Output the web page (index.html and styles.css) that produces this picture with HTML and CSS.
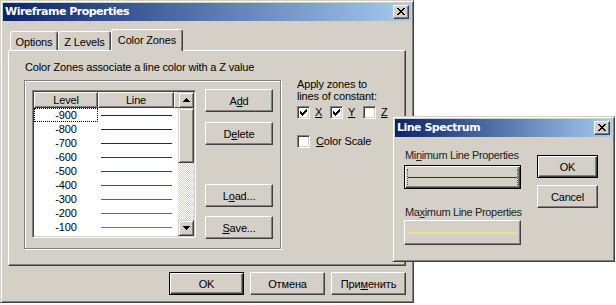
FILE: index.html
```html
<!DOCTYPE html>
<html>
<head>
<meta charset="utf-8">
<title>Wireframe Properties</title>
<link rel="stylesheet" href="styles.css">
</head>
<body>
<div class="desk">
  <div class="win main">
    <div class="titlebar">
      <span class="title">Wireframe Properties</span>
      <span class="xbtn"><svg width="8" height="7" viewBox="0 0 8 7" shape-rendering="crispEdges"><path d="M0 0h2v1h-2zM6 0h2v1h-2zM1 1h2v1h-2zM5 1h2v1h-2zM2 2h4v1h-4zM3 3h2v1h-2zM2 4h4v1h-4zM1 5h2v1h-2zM5 5h2v1h-2zM0 6h2v1h-2zM6 6h2v1h-2z" fill="#000"/></svg></span>
    </div>
    <div class="body">
      <div class="tabs">
        <div class="tab t1">Options</div>
        <div class="tab t2">Z Levels</div>
        <div class="tab sel">Color Zones</div>
      </div>
      <div class="panel">
        <div class="left">
          <div class="desc">Color Zones associate a line color with a Z value</div>
          <div class="group">
            <div class="grid">
              <div class="gmain">
                <div class="ghead"><div class="hc lv">Level</div><div class="hc ln">Line</div><div class="hc sp"></div></div>
                <div class="row"><div class="c lv focus">-900</div><div class="c ln"><i style="background:#1c1c78"></i></div></div>
                <div class="row"><div class="c lv">-800</div><div class="c ln"><i style="background:#1e1e7c"></i></div></div>
                <div class="row"><div class="c lv">-700</div><div class="c ln"><i style="background:#222280"></i></div></div>
                <div class="row"><div class="c lv">-600</div><div class="c ln"><i style="background:#2a2a84"></i></div></div>
                <div class="row"><div class="c lv">-500</div><div class="c ln"><i style="background:#3c3c88"></i></div></div>
                <div class="row"><div class="c lv">-400</div><div class="c ln"><i style="background:#4a4a8c"></i></div></div>
                <div class="row"><div class="c lv">-300</div><div class="c ln"><i style="background:#5e5e6e"></i></div></div>
                <div class="row"><div class="c lv">-200</div><div class="c ln"><i style="background:#686868"></i></div></div>
                <div class="row"><div class="c lv">-100</div><div class="c ln"><i style="background:#747474"></i></div></div>
              </div>
              <div class="sbar">
                <div class="bevel sb"><svg width="7" height="4" viewBox="0 0 7 4" shape-rendering="crispEdges"><path d="M3 0h1v1h-1zM2 1h3v1h-3zM1 2h5v1h-5zM0 3h7v1h-7z" fill="#000"/></svg></div>
                <div class="bevel thumb"></div>
                <div class="track"></div>
                <div class="bevel sb"><svg width="7" height="4" viewBox="0 0 7 4" shape-rendering="crispEdges"><path d="M0 0h7v1h-7zM1 1h5v1h-5zM2 2h3v1h-3zM3 3h1v1h-1z" fill="#000"/></svg></div>
              </div>
            </div>
            <div class="btncol">
              <div class="btn">A<u>d</u>d</div>
              <div class="btn b-del">D<u>e</u>lete</div>
              <div class="btn b-load">L<u>o</u>ad...</div>
              <div class="btn b-save"><u>S</u>ave...</div>
            </div>
          </div>
        </div>
        <div class="right">
          <div class="apply">Apply zones to<br>lines of constant:</div>
          <div class="checks">
            <div class="chk"><span class="box"><svg width="7" height="7" viewBox="0 0 7 7" shape-rendering="crispEdges"><path d="M0 2h1v3h-1zM1 3h1v3h-1zM2 4h1v3h-1zM3 3h1v3h-1zM4 2h1v3h-1zM5 1h1v3h-1zM6 0h1v3h-1z" fill="#000"/></svg></span><u>X</u></div>
            <div class="chk"><span class="box"><svg width="7" height="7" viewBox="0 0 7 7" shape-rendering="crispEdges"><path d="M0 2h1v3h-1zM1 3h1v3h-1zM2 4h1v3h-1zM3 3h1v3h-1zM4 2h1v3h-1zM5 1h1v3h-1zM6 0h1v3h-1z" fill="#000"/></svg></span><u>Y</u></div>
            <div class="chk"><span class="box"></span><u>Z</u></div>
          </div>
          <div class="chk scale"><span class="box"></span><span><u>C</u>olor Scale</span></div>
        </div>
      </div>
      <div class="actions">
        <div class="btn wide def">OK</div>
        <div class="btn wide">Отмена</div>
        <div class="btn wide">При<u>м</u>енить</div>
      </div>
    </div>
  </div>

  <div class="win spec">
    <div class="titlebar">
      <span class="title">Line Spectrum</span>
      <span class="xbtn"><svg width="8" height="7" viewBox="0 0 8 7" shape-rendering="crispEdges"><path d="M0 0h2v1h-2zM6 0h2v1h-2zM1 1h2v1h-2zM5 1h2v1h-2zM2 2h4v1h-4zM3 3h2v1h-2zM2 4h4v1h-4zM1 5h2v1h-2zM5 5h2v1h-2zM0 6h2v1h-2zM6 6h2v1h-2z" fill="#000"/></svg></span>
    </div>
    <div class="sbody">
      <div class="scol1">
        <div class="lbl">Mi<u>n</u>imum Line Properties</div>
        <div class="lbtn minb"><span class="focusline"></span><span class="minline"></span></div>
        <div class="lbl lbl2">Ma<u>x</u>imum Line Properties</div>
        <div class="btn lbtn maxb"><span class="maxline"></span></div>
      </div>
      <div class="scol2">
        <div class="btn sbtn def">OK</div>
        <div class="btn sbtn cancel">Cancel</div>
      </div>
    </div>
  </div>
</div>
</body>
</html>
```

FILE: styles.css
```css
* { box-sizing: border-box; margin: 0; padding: 0; }
html, body { width: 616px; height: 305px; overflow: hidden; background: #fff; }
body {
  font-family: "Liberation Sans", Arial, sans-serif;
  font-size: 11px;
  color: #000;
  letter-spacing: -0.15px;
}
.desk { position: relative; width: 616px; height: 305px; }

.win {
  background: #d4d0c8;
  border: 1px solid;
  border-color: #d4d0c8 #404040 #404040 #d4d0c8;
  box-shadow: inset 1px 1px #fff, inset -1px -1px #808080;
  padding: 2px;
  display: flex;
  flex-direction: column;
}
.main { width: 414px; height: 303px; }

.titlebar {
  height: 18px;
  flex: none;
  display: flex;
  align-items: center;
  justify-content: space-between;
  padding: 0 2px;
  background: linear-gradient(to right, #0a246a, #a6caf0);
}
.title {
  color: #fff;
  font-family: "DejaVu Sans", sans-serif;
  font-weight: bold;
  font-size: 11px;
  letter-spacing: -0.5px;
  line-height: 18px;
}
.xbtn {
  width: 16px;
  height: 14px;
  background: #d4d0c8;
  border: 1px solid;
  border-color: #fff #404040 #404040 #fff;
  box-shadow: inset -1px -1px #808080;
  padding: 2px 0 0 3px;
}
.xbtn svg { display: block; }

.body { flex: 1; display: flex; flex-direction: column; padding: 8px 5px 0; }

.tabs { display: flex; align-items: flex-end; height: 21px; padding-left: 2px; }
.tab {
  height: 19px;
  border: 1px solid;
  border-bottom: none;
  border-color: #fff #404040 #fff #fff;
  border-radius: 3px 3px 0 0;
  box-shadow: inset -1px 0 #808080;
  display: flex;
  align-items: center;
  justify-content: center;
  padding-top: 2px;
  background: #d4d0c8;
}
.t1 { width: 48px; }
.t2 { width: 53px; }
.sel {
  width: 72px;
  height: 22px;
  margin-bottom: -1px;
  position: relative;
  z-index: 1;
  padding-top: 0;
  padding-bottom: 1px;
}

.panel {
  height: 216px;
  border: 1px solid;
  border-color: #fff #404040 #404040 #fff;
  box-shadow: inset -1px -1px #808080;
  display: flex;
  gap: 16px;
  padding: 10px 0 0 15px;
}
.left { width: 257px; }
.desc { height: 13px; line-height: 13px; padding-left: 1px; white-space: nowrap; }
.group {
  margin-top: 6px;
  width: 257px;
  height: 169px;
  border: 1px solid #808080;
  box-shadow: inset 1px 1px #fff, 1px 1px #fff;
  display: flex;
  align-items: flex-start;
  gap: 9px;
  padding: 8px 7px 0;
}

.grid {
  margin-top: 1px;
  width: 164px;
  height: 148px;
  border: 1px solid;
  border-color: #808080 #fff #fff #808080;
  box-shadow: inset 1px 1px #404040, inset -1px -1px #d4d0c8;
  padding: 1px;
  background: #fff;
  display: flex;
}
.gmain { width: 144px; }
.ghead { display: flex; height: 16px; }
.hc {
  height: 16px;
  background: #d4d0c8;
  border: 1px solid;
  border-color: #fff #404040 #404040 #fff;
  box-shadow: inset -1px -1px #808080;
  text-align: center;
  line-height: 14px;
}
.hc.lv { width: 64px; }
.hc.ln { width: 76px; }
.hc.sp { width: 4px; border-right: none; box-shadow: none; border-bottom-color: #404040; }
.row { display: flex; height: 14px; }
.c { height: 14px; line-height: 14px; }
.c.lv { width: 64px; text-align: center; }
.c.ln { width: 76px; display: flex; align-items: center; padding-left: 3px; }
.c.ln i { display: block; width: 71px; height: 1px; }
.focus { outline: 1px dotted #000; outline-offset: -1px; }

.sbar { width: 16px; display: flex; flex-direction: column; }
.bevel {
  background: #d4d0c8;
  border: 1px solid;
  border-color: #d4d0c8 #404040 #404040 #d4d0c8;
  box-shadow: inset 1px 1px #fff, inset -1px -1px #808080;
}
.sb { height: 16px; display: flex; align-items: center; justify-content: center; }
.sb svg { display: block; }
.thumb { height: 55px; }
.track {
  flex: 1;
  background: repeating-conic-gradient(#fff 0 25%, #d4d0c8 0 50%) 0 0 / 2px 2px;
}

.btncol { display: flex; flex-direction: column; }
.btn {
  width: 68px;
  height: 23px;
  background: #d4d0c8;
  border: 1px solid;
  border-color: #fff #404040 #404040 #fff;
  box-shadow: inset -1px -1px #808080;
  display: flex;
  align-items: center;
  justify-content: center;
  white-space: nowrap;
}
.b-del { margin-top: 10px; }
.b-load { margin-top: 39px; }
.b-save { margin-top: 9px; }

.right { margin-top: 17px; display: flex; flex-direction: column; }
.apply { line-height: 12px; }
.checks { display: flex; margin-top: 4px; height: 13px; }
.chk { display: flex; align-items: center; gap: 5px; width: 33px; height: 13px; line-height: 13px; }
.box {
  width: 13px;
  height: 13px;
  flex: none;
  background: #fff;
  border: 1px solid;
  border-color: #808080 #fff #fff #808080;
  box-shadow: inset 1px 1px #404040, inset -1px -1px #d4d0c8;
  padding: 2px;
}
.box svg { display: block; }
.scale { margin-top: 16px; width: auto; gap: 6px; }

.actions { display: flex; justify-content: flex-end; gap: 6px; margin-top: 6px; }
.btn.wide { width: 75px; }
.btn.def {
  border: 1px solid #000;
  box-shadow: inset 1px 1px #fff, inset -1px -1px #404040, inset -2px -2px #808080;
}

.spec {
  position: absolute;
  left: 392px;
  top: 116px;
  width: 223px;
  height: 146px;
}
.sbody { display: flex; gap: 16px; padding: 12px 0 0 9px; letter-spacing: -0.35px; }
.scol1 { width: 117px; }
.lbl { line-height: 12px; padding-left: 1px; white-space: nowrap; color: #222; }
.lbl2 { margin-top: 17px; }
.lbtn { width: 117px; margin-top: 4px; height: 24px; position: relative; display: flex; align-items: center; justify-content: center; }
.minb {
  background: #d4d0c8;
  border: 1px solid #000;
  box-shadow: inset 1px 1px #fff, inset -1px -1px #404040, inset -2px -2px #808080;
}
.focusline {
  position: absolute;
  left: 2px;
  right: 2px;
  top: 3px;
  bottom: 3px;
  border-left: 1px dotted #555;
  border-right: 1px dotted #555;
}
.minline { display: block; flex: none; width: 109px; height: 1px; background: #2020c0; }
.maxb { margin-top: 2px; height: 25px; }
.maxline { display: block; flex: none; width: 109px; height: 2px; background: #e8e878; }
.scol2 { width: 61px; margin-top: 6px; display: flex; flex-direction: column; }
.sbtn { width: 61px; letter-spacing: -0.2px; }
.cancel { margin-top: 7px; }
```
